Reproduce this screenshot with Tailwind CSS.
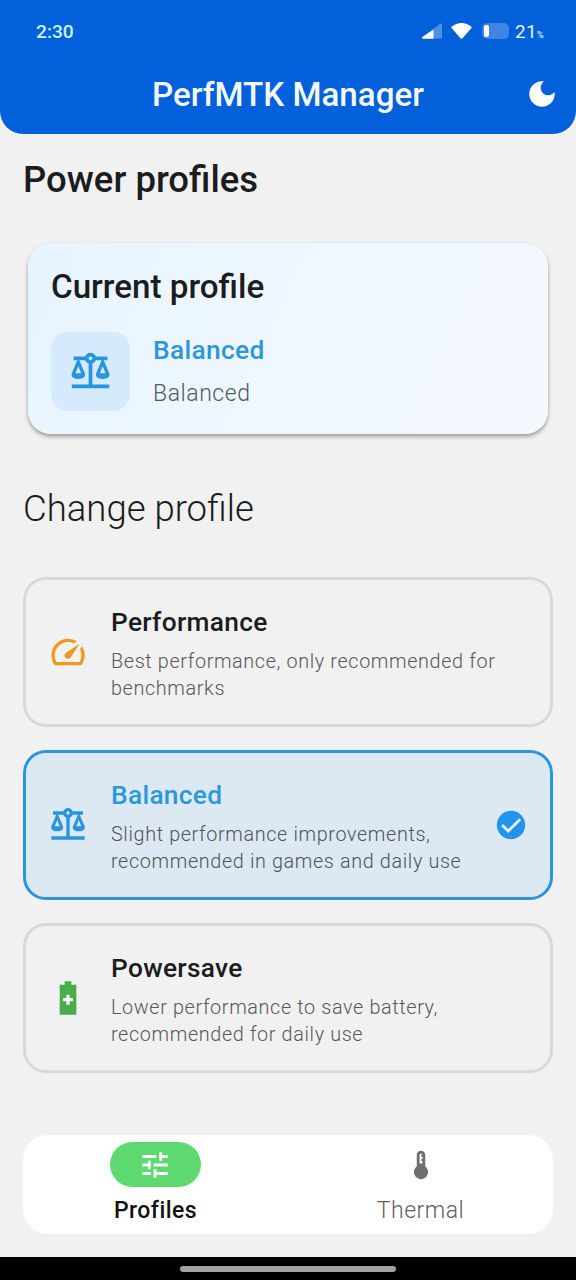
<!DOCTYPE html>
<html lang="en">
<head>
<meta charset="utf-8">
<title>PerfMTK Manager</title>
<script src="https://cdn.jsdelivr.net/npm/@tailwindcss/browser@4"></script>
</head>
<body class="bg-[#f1f1f1]">
<svg class="hidden">
  <symbol id="scale" viewBox="0 0 24 24"><path d="M12,3C10.73,3 9.6,3.8 9.18,5H3V7H4.95L2,14C1.53,16 3,17 5.5,17C8,17 9.56,16 9,14L6.05,7H9.17C9.5,7.85 10.15,8.5 11,8.83V20H2V22H22V20H13V8.82C13.85,8.5 14.5,7.85 14.82,7H17.95L15,14C14.53,16 16,17 18.5,17C21,17 22.56,16 22,14L19.05,7H21V5H14.83C14.4,3.8 13.27,3 12,3M12,5A1,1 0 0,1 13,6A1,1 0 0,1 12,7A1,1 0 0,1 11,6A1,1 0 0,1 12,5M5.5,10.25L7,14H4L5.5,10.25M18.5,10.25L20,14H17L18.5,10.25Z"/></symbol>
</svg>
<div class="flex h-[1280px] w-[576px] flex-col overflow-hidden bg-[#f1f1f1] font-['Roboto',sans-serif] text-[#1a1c20]">
  <header class="flex h-[134px] shrink-0 flex-col rounded-b-[23px] bg-[#0360db] text-[#f3f9ff]">
    <div class="flex h-[62px] items-center pr-[32px] pl-[36px]">
      <span class="grow pt-[3px] text-[19.200px] font-medium text-[#c9f3ff]">2:30</span>
      <svg class="mr-[9px] h-[17px] w-[20px]" viewBox="0 0 20 17"><path d="M0 15.500 18 .8Q20 0 20 2V15.500Z" fill="#4c90e8"/><path d="M1 13.500 11.500 6.500V15.800H1Q-1 15.500 1 13.500Z" fill="#fff"/></svg>
      <svg class="mr-[10px] h-[17px] w-[21px]" viewBox="0 0 21 17"><path d="M.8 3.500Q10.500-3.600 20.200 3.500Q21 4.500 20 5.500L11.500 15.300Q10.500 16.200 9.500 15.300L1 5.500Q0 4.500 .8 3.500Z" fill="#fff"/></svg>
      <div class="mr-[6px] flex h-[16px] w-[27px] items-center rounded-[5px] bg-[#3f84e6] pl-[2px]"><div class="h-[12px] w-[5px] rounded-[2px] bg-white"></div></div>
      <span class="pt-[3px] text-[19px] tracking-[0.3px] text-[#e4f5ff]">21<span class="text-[9px] font-medium">%</span></span>
    </div>
    <div class="grid h-[64px] grid-cols-[60px_1fr_60px] items-center">
      <h1 class="col-start-2 pt-[2px] text-center text-[33.200px] font-medium whitespace-nowrap">PerfMTK Manager</h1>
      <svg class="ml-[9px] size-[34px]" viewBox="0 0 24 24" fill="#fbfdf8"><path d="M12 3c-4.970 0-9 4.030-9 9s4.030 9 9 9 9-4.030 9-9c0-.46-.04-.92-.1-1.360-.98 1.370-2.580 2.260-4.400 2.260-2.980 0-5.400-2.420-5.400-5.400 0-1.810.89-3.420 2.260-4.400-.44-.06-.9-.1-1.360-.1z"/></svg>
    </div>
  </header>
  <main class="flex grow flex-col px-[23px]">
    <h2 class="mt-[22px] h-[48px] text-[36.500px] leading-[48px] font-medium">Power profiles</h2>
    <section class="mx-[5px] mt-[39px] flex h-[191px] shrink-0 flex-col rounded-[23px] bg-[linear-gradient(115deg,#e6f4ff,#eff7ff_50%,#f4f8ff)] px-[23px] pt-[22px] shadow-[0_3px_4px_rgba(0,0,0,0.28),0_1px_3px_rgba(0,0,0,0.12)]">
      <h3 class="h-[44px] text-[33.200px] leading-[44px] font-medium">Current profile</h3>
      <div class="mt-[23px] flex gap-[23px]">
        <div class="flex size-[79px] items-center justify-center rounded-[17px] bg-[#d5eafd]"><svg class="mb-[4px] size-[45px]" fill="#2794de"><use href="#scale"/></svg></div>
        <div class="flex flex-col">
          <p class="h-[36px] text-[26.300px] leading-[36px] font-medium tracking-[0.350px] text-[#2b98dc]">Balanced</p>
          <p class="mt-[9px] h-[34px] text-[23px] leading-[34px] font-light tracking-[0.550px] text-[#55585f]">Balanced</p>
        </div>
      </div>
    </section>
    <h2 class="mt-[51px] h-[48px] text-[36.500px] leading-[48px] font-light">Change profile</h2>
    <div class="mt-[44px] flex flex-col gap-[23px]">
      <article class="flex h-[150px] items-center rounded-[23px] border-[3px] border-[#d9d9d9] pl-[22px]">
        <svg class="size-[40px] shrink-0" viewBox="0 0 24 24" fill="#ee9a1f"><path d="M20.380 8.570l-1.230 1.850a8 8 0 0 1-.22 7.580H5.070A8 8 0 0 1 15.580 6.850l1.850-1.230A10 10 0 0 0 3.350 19a2 2 0 0 0 1.720 1h13.850a2 2 0 0 0 1.740-1 10 10 0 0 0-.27-10.440zm-9.790 6.840a2 2 0 0 0 2.830 0l5.660-8.490-8.490 5.660a2 2 0 0 0 0 2.830z"/></svg>
        <div class="ml-[23px] grow pt-[2px] whitespace-nowrap">
          <h4 class="h-[36px] text-[26.300px] leading-[36px] font-medium tracking-[0.3px]">Performance</h4>
          <p class="mt-[8px] text-[19.800px] leading-[27px] font-light tracking-[0.640px] text-[#55575b]">Best performance, only recommended for<br>benchmarks</p>
        </div>
      </article>
      <article class="flex h-[150px] items-center rounded-[23px] border-[3px] border-[#2b94dd] bg-[#dce9f3] pl-[22px]">
        <svg class="mb-[4px] size-[40px] shrink-0" fill="#2794de"><use href="#scale"/></svg>
        <div class="ml-[23px] grow pt-[2px] whitespace-nowrap">
          <h4 class="h-[36px] text-[26.300px] leading-[36px] font-medium tracking-[0.3px] text-[#2b98dc]">Balanced</h4>
          <p class="mt-[8px] text-[19.800px] leading-[27px] font-light tracking-[0.640px] text-[#505357]">Slight performance improvements,<br>recommended in games and daily use</p>
        </div>
        <svg class="mr-[22px] size-[34px] shrink-0" viewBox="0 0 24 24"><circle cx="12" cy="12" r="10" fill="#2293ed"/><path d="M5.700 12 10 16.200 18.500 7.900" fill="none" stroke="#e4f1fa" stroke-width="2"/></svg>
      </article>
      <article class="flex h-[150px] items-center rounded-[23px] border-[3px] border-[#d9d9d9] pl-[22px]">
        <svg class="size-[40px] shrink-0" viewBox="0 0 24 24" fill="#48ae4d"><path d="M17 4h-3V2h-4v2H7v18h10V4zm-2 10h-2v2h-2v-2H9v-2h2v-2h2v2h2v2z"/></svg>
        <div class="ml-[23px] grow pt-[2px] whitespace-nowrap">
          <h4 class="h-[36px] text-[26.300px] leading-[36px] font-medium tracking-[0.3px]">Powersave</h4>
          <p class="mt-[8px] text-[19.800px] leading-[27px] font-light tracking-[0.640px] text-[#55575b]">Lower performance to save battery,<br>recommended for daily use</p>
        </div>
      </article>
    </div>
  </main>
  <nav class="mx-[23px] mb-[23px] grid h-[99px] shrink-0 grid-cols-2 rounded-[25px] bg-white text-[23px]">
    <div class="flex flex-col items-center pt-[7px]">
      <div class="flex h-[45px] w-[91px] items-center justify-center rounded-full bg-[#5dd970]"><svg class="mr-[1px] size-[34px]" viewBox="0 0 24 24" fill="#fff"><path d="M3 17v2h6v-2H3zM3 5v2h10V5H3zm10 16v-2h8v-2h-8v-2h-2v6h2zM7 9v2H3v2h4v2h2V9H7zm14 4v-2H11v2h10zm-6-4h2V7h4V5h-4V3h-2v6z"/></svg></div>
      <span class="mt-[7px] h-[34px] leading-[34px] font-medium tracking-[0.450px] text-[#111]">Profiles</span>
    </div>
    <div class="flex flex-col items-center pt-[7px]">
      <div class="flex h-[45px] w-[91px] items-center justify-center"><svg class="size-[34px]" viewBox="0 0 24 24" fill="#6f6f6f"><path d="M15 13V5c0-1.660-1.340-3-3-3S9 3.340 9 5v8c-1.210.91-2 2.370-2 4 0 2.760 2.240 5 5 5s5-2.240 5-5c0-1.630-.79-3.090-2-4zm-4-8c0-.55.45-1 1-1s1 .45 1 1h-1v1h1v2h-1v1h1v2h-2V5z"/></svg></div>
      <span class="mt-[7px] h-[34px] leading-[34px] font-light tracking-[0.5px] text-[#606060]">Thermal</span>
    </div>
  </nav>
  <footer class="flex h-[23px] shrink-0 items-center justify-center bg-black"><div class="h-[6px] w-[216px] rounded-full bg-[#a3a3a3]"></div></footer>
</div>
</body>
</html>
